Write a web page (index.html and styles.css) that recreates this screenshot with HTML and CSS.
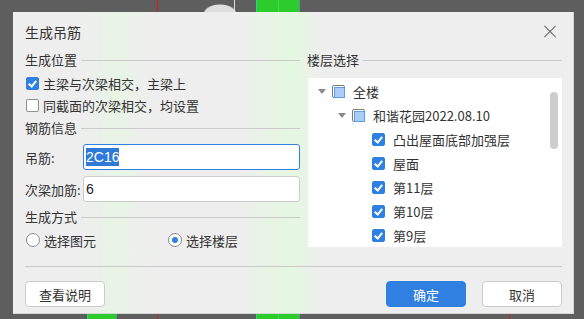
FILE: index.html
```html
<!DOCTYPE html>
<html>
    <head>
        <title> 生成吊筋 </title>
        <meta charset="utf-8"/>
        <link rel="stylesheet" href="styles.css">
    </head>
    <body>

        <div class="dialog">

            <header>
                <h1> 生成吊筋 </h1>
                <span class="close"></span>
            </header>

            <main>

                <section class="left">
                    <div class="legend"><span>生成位置</span></div>
                    <label class="check-row"><span class="box checked"></span>主梁与次梁相交，主梁上</label>
                    <label class="check-row"><span class="box"></span>同截面的次梁相交，均设置</label>

                    <div class="legend gap"><span>钢筋信息</span></div>
                    <div class="field first">
                        <label>吊筋:</label>
                        <div class="input focus"><span class="selected">2C16</span></div>
                    </div>
                    <div class="field">
                        <label>次梁加筋:</label>
                        <div class="input">6</div>
                    </div>

                    <div class="legend mode"><span>生成方式</span></div>
                    <div class="radios">
                        <label class="radio-row"><span class="radio"></span>选择图元</label>
                        <label class="radio-row"><span class="radio on"></span>选择楼层</label>
                    </div>
                </section>

                <section class="right">
                    <div class="legend"><span>楼层选择</span></div>
                    <div class="tree">
                        <div class="node level-0"><span class="arrow"></span><span class="box partial"></span>全楼</div>
                        <div class="node level-1"><span class="arrow"></span><span class="box partial"></span>和谐花园2022.08.10</div>
                        <div class="node level-2"><span class="arrow none"></span><span class="box checked"></span>凸出屋面底部加强层</div>
                        <div class="node level-2"><span class="arrow none"></span><span class="box checked"></span>屋面</div>
                        <div class="node level-2"><span class="arrow none"></span><span class="box checked"></span>第11层</div>
                        <div class="node level-2"><span class="arrow none"></span><span class="box checked"></span>第10层</div>
                        <div class="node level-2"><span class="arrow none"></span><span class="box checked"></span>第9层</div>
                        <div class="scrollbar"></div>
                    </div>
                </section>

            </main>

            <footer>
                <button class="btn">查看说明</button>
                <div class="actions">
                    <button class="btn primary">确定</button>
                    <button class="btn">取消</button>
                </div>
            </footer>

        </div>

    </body>
</html>
```

FILE: styles.css
```css
* {
    margin: 0;
    padding: 0;
    box-sizing: border-box;
}

html, body {
    width: 584px;
    height: 319px;
    overflow: hidden;
}

body {
    padding: 12px 0 0 13px;

    font-family: 'Noto Sans CJK SC', 'Noto Sans', sans-serif;
    font-size: 13px;
    color: #333;

    /* canvas behind the dialog: dome, top strip, bottom strip */
    background-color: #5e5e5e;
    background-repeat: no-repeat;
    background-size: 584px 12px, 584px 12px, 584px 5px;
    background-position: 0 0, 0 0, 0 100%;
    background-image:
        radial-gradient(ellipse 17px 10px at 220px 14px, #dedede 90%, transparent 100%),
        linear-gradient(to right,
            transparent 157px, #d42020 157px, #d42020 158px, transparent 158px,
            transparent 234px, #dcdcdc 234px, #dcdcdc 235px, transparent 235px,
            transparent 256px, #3ad6d6 256px, #2bcc2b 257px, #2bcc2b 278px, #7ccf7c 278px, #2bcc2b 279px, #2bcc2b 299px, #3ad6d6 299px, transparent 300px),
        linear-gradient(to right,
            transparent 87px, #3ad6d6 87px, #2bcc2b 88px, #2bcc2b 116px, #3ad6d6 116px, transparent 117px,
            transparent 157px, #d42020 157px, #d42020 158px, transparent 158px,
            transparent 256px, #3ad6d6 256px, #2bcc2b 257px, #2bcc2b 278px, #7ccf7c 278px, #2bcc2b 279px, #2bcc2b 299px, #3ad6d6 299px, transparent 300px,
            transparent 509px, #d42020 509px, #d42020 510px, transparent 510px);
}

.dialog {
    width: 561px;
    height: 302px;
    padding: 0 11px 0 12px;

    display: flex;
    flex-direction: column;

    background-color: #eeeeee;
    background-image:
        linear-gradient(to right,
            transparent 70px, rgba(226, 250, 222, 0.55) 105px, transparent 140px,
            transparent 225px, rgba(226, 250, 222, 0.7) 270px, rgba(226, 250, 222, 0.7) 285px, transparent 305px);
    border: 1px solid #d6d6d6;
    border-left: none;
    border-top: none;
}

header {
    height: 40px;

    display: flex;
    justify-content: space-between;
    align-items: center;
}

header h1 {
    font-size: 14px;
    font-weight: normal;
    color: #333;
}

header .close {
    width: 12px;
    height: 12px;
    margin-right: 6px;
    position: relative;
}

header .close::before,
header .close::after {
    content: '';
    position: absolute;
    left: -2px;
    top: 5px;
    width: 16px;
    height: 1px;
    background-color: #666;
    transform: rotate(45deg);
}

header .close::after {
    transform: rotate(-45deg);
}

main {
    display: flex;
    gap: 7px;
}

main .left {
    width: 275px;
}

main .right {
    width: 256px;
}

.legend {
    height: 16px;

    display: flex;
    align-items: center;
    gap: 4px;

    line-height: 16px;
}

.legend::after {
    content: '';
    flex: 1;
    height: 1px;
    background-color: #cbcbcb;
}

.legend.gap {
    margin-top: 4px;
}

.legend.mode {
    margin-top: 7px;
}

.check-row,
.radio-row {
    height: 22px;

    display: flex;
    align-items: center;
    gap: 4px;
}

.check-row:first-of-type {
    margin-top: 4px;
}

.left .check-row {
    padding-left: 1px;
}

.box {
    width: 13px;
    height: 13px;
    flex-shrink: 0;

    border: 1px solid #8f8f8f;
    border-radius: 2px;
    background-color: white;
    position: relative;
}

.box.checked {
    border-color: #2f80e1;
    background-color: #2f80e1;
}

.box.checked::after {
    content: '';
    position: absolute;
    left: 3px;
    top: 1px;
    width: 3px;
    height: 6px;
    border: solid white;
    border-width: 0 2px 2px 0;
    transform: rotate(40deg);
}

.box.partial {
    border-color: #7a7a7a;
}

.box.partial::after {
    content: '';
    position: absolute;
    left: 1px;
    top: 1px;
    width: 9px;
    height: 9px;
    background-color: #a9cdf7;
    border: 1px solid #5d9ee8;
}

.field {
    height: 26px;
    margin-top: 6px;

    display: flex;
    align-items: center;
}

.field.first {
    margin-top: 8px;
}

.field label {
    width: 58px;
}

.input {
    width: 217px;
    height: 26px;
    padding-left: 2px;

    display: flex;
    align-items: center;

    background-color: white;
    border: 1px solid #cccccc;
    border-radius: 3px;
    font-family: 'Liberation Sans', 'Noto Sans CJK SC', sans-serif;
    font-size: 14px;
    color: #222;
}

.input.focus {
    border-color: #2f80e1;
}

.input .selected {
    padding: 1px 0;
    background-color: #2f79d8;
    color: white;
    line-height: 16px;
}

.radios {
    margin-top: 4px;

    display: grid;
    grid-template-columns: 142px 1fr;
}

.radio-row {
    padding-left: 1px;
}

.radio {
    width: 14px;
    height: 14px;

    border: 1px solid #8a8a8a;
    border-radius: 50%;
    background-color: white;

    display: flex;
    justify-content: center;
    align-items: center;
}

.radio.on::after {
    content: '';
    width: 6px;
    height: 6px;
    border-radius: 50%;
    background-color: #2f80e1;
}

.tree {
    height: 169px;
    margin-top: 10px;
    margin-left: 1px;
    padding-top: 1px;

    background-color: white;
    overflow: hidden;
    position: relative;
}

.tree .node {
    height: 24px;

    display: flex;
    align-items: center;

    white-space: nowrap;
}

.tree .node .box {
    margin-right: 8px;
}

.tree .level-0 { padding-left: 4px; }
.tree .level-1 { padding-left: 24px; }
.tree .level-2 { padding-left: 44px; }

.tree .arrow {
    width: 20px;
    height: 24px;

    display: flex;
    justify-content: center;
    align-items: center;
}

.tree .arrow::after {
    content: '';
    border-left: 4px solid transparent;
    border-right: 4px solid transparent;
    border-top: 5px solid #8a8a8a;
}

.tree .arrow.none::after {
    display: none;
}

.tree .scrollbar {
    position: absolute;
    right: 4px;
    top: 14px;
    width: 8px;
    height: 57px;

    border-radius: 4px;
    background-color: #cdcdcd;
}

footer {
    margin-top: 15px;
    padding-top: 14px;

    display: flex;
    justify-content: space-between;

    border-top: 1px solid #cbcbcb;
}

footer .actions {
    display: flex;
    gap: 16px;
}

.btn {
    width: 80px;
    height: 26px;

    background-color: white;
    border: 1px solid #cbcbcb;
    border-radius: 4px;
    font-family: 'Noto Sans CJK SC', sans-serif;
    font-size: 13px;
    color: #333;
}

.btn.primary {
    background-color: #2f80e1;
    border-color: #2f80e1;
    color: white;
}
```
